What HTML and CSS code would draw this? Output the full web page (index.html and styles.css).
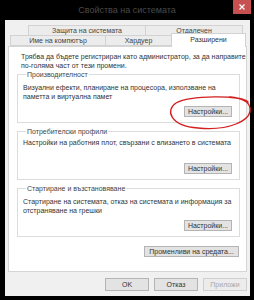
FILE: index.html
```html
<!DOCTYPE html>
<html lang="bg">
<head>
<meta charset="utf-8">
<title>Свойства на системата</title>
<link rel="stylesheet" href="styles.css">
</head>
<body>
<div class="frame">
  <div class="titlebar">
    <span class="title">Свойства на системата</span>
    <span class="close"><svg width="6" height="6" viewBox="0 0 6 6"><path d="M0.5 0.5L5.5 5.5M5.5 0.5L0.5 5.5" stroke="#fff" stroke-width="1.2"/></svg></span>
  </div>
  <div class="dialog">
    <div class="tabs">
      <div class="tabrow row1">
        <div class="tab t1">Защита на системата</div>
        <div class="tab t2">Отдалечен</div>
      </div>
      <div class="tabrow row2">
        <div class="tab t3">Име на компютър</div>
        <div class="tab t4">Хардуер</div>
        <div class="tab t5 active">Разширени</div>
      </div>
    </div>
    <div class="panel">
      <p class="intro">Трябва да бъдете регистриран като администратор, за да направите<br>по-голяма част от тези промени.</p>
      <fieldset class="group">
        <legend>Производителност</legend>
        <p class="gtext">Визуални ефекти, планиране на процесора, използване на<br>паметта и виртуална памет</p>
        <div class="brow"><button class="btn">Настройки...</button></div>
      </fieldset>
      <fieldset class="group g2">
        <legend>Потребителски профили</legend>
        <p class="gtext">Настройки на работния плот, свързани с влизането в системата</p>
        <div class="brow"><button class="btn">Настройки...</button></div>
      </fieldset>
      <fieldset class="group">
        <legend>Стартиране и възстановяване</legend>
        <p class="gtext">Стартиране на системата, отказ на системата и информация за<br>отстраняване на грешки</p>
        <div class="brow"><button class="btn">Настройки...</button></div>
      </fieldset>
      <div class="brow env"><button class="btn wide">Променливи на средата...</button></div>
    </div>
    <div class="actions">
      <button class="btn act">OK</button>
      <button class="btn act">Отказ</button>
      <button class="btn act disabled">Приложи</button>
    </div>
  </div>
</div>
<svg class="mark" width="254" height="300" viewBox="0 0 254 300">
  <path d="M248 102 C242 95 190 95 176 103 C165 110 170 126 198 128 C228 131 252 121 250 108 C249 101 241 98 230 97" fill="none" stroke="#d21f1f" stroke-width="1.3" stroke-linecap="round"/>
</svg>
</body>
</html>
```
FILE: styles.css
```css
* { box-sizing: border-box; }
html, body { margin: 0; padding: 0; }
body {
  width: 254px;
  height: 300px;
  background: #000;
  font-family: "Liberation Sans", Arial, sans-serif;
  font-size: 7px;
  color: #333;
  position: relative;
  overflow: hidden;
}
.frame {
  width: 254px;
  height: 300px;
  display: flex;
  flex-direction: column;
}
.titlebar {
  height: 20px;
  position: relative;
  display: flex;
  align-items: center;
  justify-content: center;
}
.title {
  font-size: 9px;
  color: #4a4a4a;
}
.close {
  position: absolute;
  top: 0;
  left: 233px;
  width: 18px;
  height: 14px;
  background: #c75050;
  display: flex;
  align-items: center;
  justify-content: center;
}
.dialog {
  margin: 0 4px 0 5px;
  height: 276px;
  background: #f0f0f0;
  padding: 5px 3px 0 3px;
  display: flex;
  flex-direction: column;
}
.tabs {
  height: 21px;
  display: flex;
  flex-direction: column;
}
.tabrow { display: flex; }
.row1 { height: 10px; padding-left: 20px; }
.row2 { height: 11px; padding-left: 2px; position: relative; z-index: 1; }
.tab {
  border: 1px solid #d2d2d2;
  background: #ececec;
  color: #444;
  line-height: 8px;
  text-align: center;
  white-space: nowrap;
  display: flex;
  align-items: center;
  justify-content: center;
  margin-left: -1px;
}
.row1 .tab { border-bottom: none; }
.t1 { width: 118px; margin-left: 0; }
.t2 { width: 98px; }
.t3 { width: 96px; margin-left: 0; }
.t4 { width: 67px; }
.t5 { width: 75px; }
.tab.active {
  background: #fff;
  border-bottom: none;
  margin-top: -2px;
  height: 14px;
  align-items: flex-start;
  padding-top: 2px;
  color: #333;
}
.panel {
  height: 226px;
  border: 1px solid #d5d5d5;
  background: #fff;
  padding: 5px 6px 0 8px;
  display: flex;
  flex-direction: column;
}
.intro {
  margin: 0 0 0 4px;
  line-height: 9px;
  white-space: nowrap;
}
.group {
  margin: 0 0 4px 0;
  padding: 0 7px 5px 5px;
  border: 1px solid #dcdcdc;
  min-width: 0;
}
.group legend {
  padding: 0 1px;
  margin-left: 3px;
  line-height: 9px;
  color: #444;
}
.gtext {
  margin: 4px 0 0 0;
  line-height: 9px;
  height: 18px;
  white-space: nowrap;
}
.g2 .gtext { margin-top: 2px; height: 20px; }
.brow {
  display: flex;
  justify-content: flex-end;
  margin-top: 5px;
}
.btn {
  font-family: "Liberation Sans", Arial, sans-serif;
  font-size: 7px;
  color: #333;
  height: 11px;
  width: 48px;
  padding: 0;
  border: 1px solid #b4b4b4;
  background: #e3e3e3;
  line-height: 9px;
  white-space: nowrap;
}
.brow.env { margin-top: 5px; padding-right: 1px; }
.btn.wide { width: 95px; }
.actions {
  display: flex;
  justify-content: flex-end;
  gap: 5px;
  margin-top: 6px;
}
.btn.act { width: 44px; height: 13px; }
.btn.disabled { color: #a8a8a8; border-color: #cfcfcf; background: #ececec; }
.mark {
  position: absolute;
  left: 0;
  top: 0;
  pointer-events: none;
}
```
